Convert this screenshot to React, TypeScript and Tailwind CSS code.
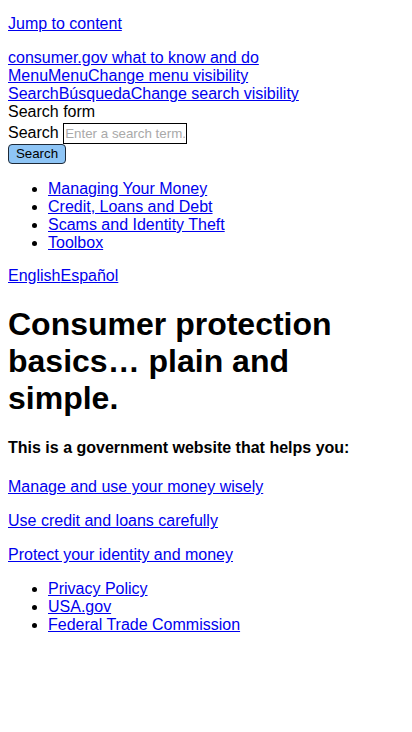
const linkCls = 'text-[#0000ee] underline'

const topics = ['Managing Your Money', 'Credit, Loans and Debt', 'Scams and Identity Theft', 'Toolbox']
const helps = ['Manage and use your money wisely', 'Use credit and loans carefully', 'Protect your identity and money']
const footer = ['Privacy Policy', 'USA.gov', 'Federal Trade Commission']

export default function App() {
  return (
    <div className="min-h-[732px] bg-white px-2 pt-[15px] text-[16px] leading-[normal] text-black font-['Liberation_Sans',Arial,sans-serif]">
      <p>
        <a href="#main" className={linkCls}>Jump to content</a>
      </p>

      <header className="mt-[16px]">
        <div>
          <a href="#" className={linkCls}>consumer.gov what to know and do</a>
        </div>
        <div>
          <a href="#" className={linkCls}>MenuMenuChange menu visibility</a>
        </div>
        <div>
          <a href="#" className={linkCls}>SearchBúsquedaChange search visibility</a>
        </div>
        <form onSubmit={(e) => e.preventDefault()}>
          <div>Search form</div>
          <div className="flex items-end gap-[4.5px] h-[23px]">
            <label htmlFor="q" className="pb-[2px]">Search</label>
            <input
              id="q"
              type="text"
              placeholder="Enter a search term."
              className="w-[124px] h-[21px] border border-black px-[1px] text-[13.33px] placeholder:text-[#a9a9a9] font-['Liberation_Sans',Arial,sans-serif] outline-none"
            />
          </div>
          <button
            type="submit"
            className="block w-[58px] h-[20px] rounded-[4px] border border-[#1e2a38] bg-[#8ec5f6] text-[13.33px] leading-none text-black"
          >
            Search
          </button>
        </form>

        <ul className="mt-[16px] list-disc pl-[40px]">
          {topics.map((t) => (
            <li key={t}>
              <a href="#" className={linkCls}>{t}</a>
            </li>
          ))}
        </ul>

        <p className="mt-[15px]">
          <a href="#" className={linkCls}>English</a>
          <a href="#" className={linkCls}>Español</a>
        </p>
      </header>

      <main id="main">
        <h1 className="mt-[21.44px] mb-[21.44px] text-[32px] font-bold leading-[normal]">
          Consumer protection basics… plain and simple.
        </h1>
        <h4 className="font-bold">This is a government website that helps you:</h4>
        {helps.map((h, i) => (
          <p key={h} className={i === 0 ? 'mt-[21.28px]' : 'mt-[16px]'}>
            <a href="#" className={linkCls}>{h}</a>
          </p>
        ))}
      </main>

      <ul className="mt-[16px] list-disc pl-[40px]">
        {footer.map((f) => (
          <li key={f}>
            <a href="#" className={linkCls}>{f}</a>
          </li>
        ))}
      </ul>
    </div>
  )
}
